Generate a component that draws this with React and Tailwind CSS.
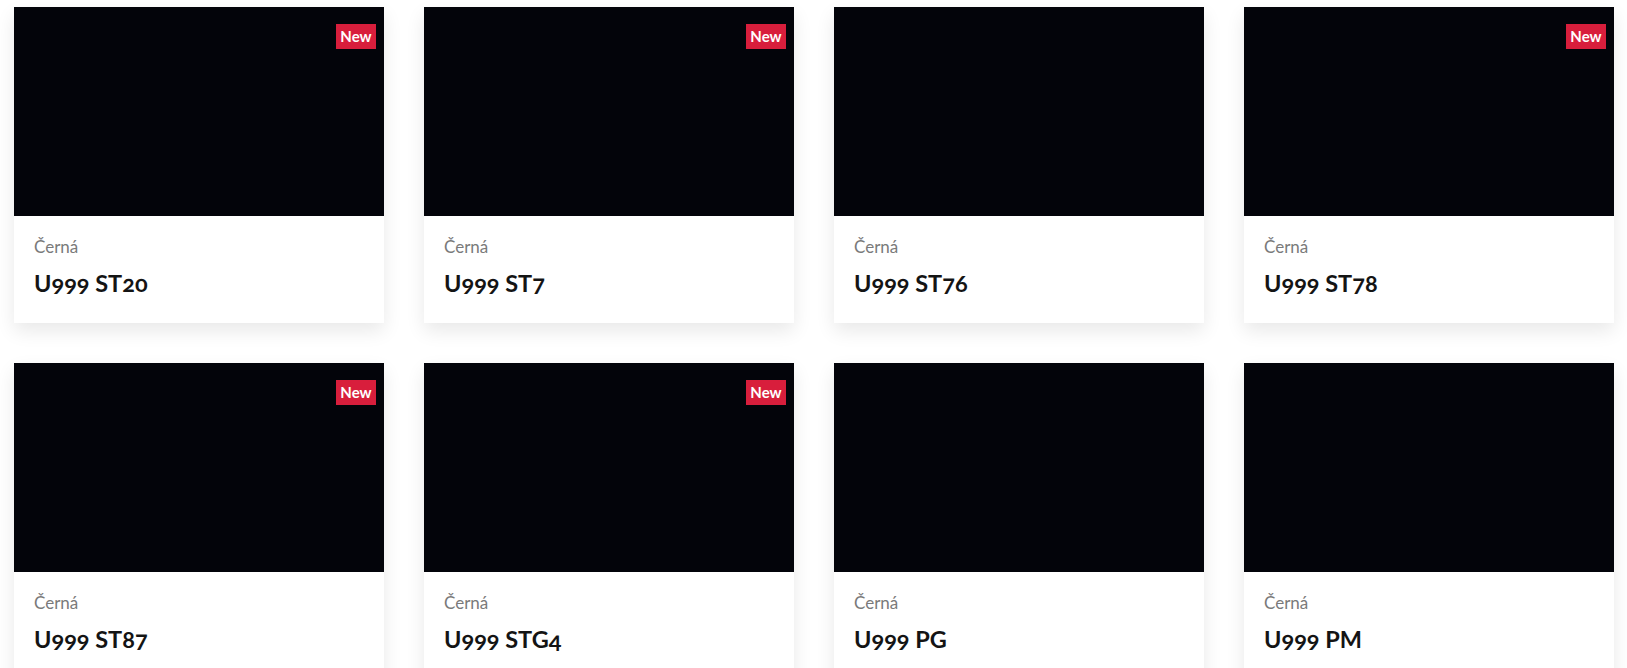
import React from "react";

const items = [
  { code: "U999 ST20", isNew: true },
  { code: "U999 ST7", isNew: true },
  { code: "U999 ST76", isNew: false },
  { code: "U999 ST78", isNew: true },
  { code: "U999 ST87", isNew: true },
  { code: "U999 STG4", isNew: true },
  { code: "U999 PG", isNew: false },
  { code: "U999 PM", isNew: false },
];

function Card({ code, isNew }) {
  return (
    <div className="bg-white shadow-[0_8px_18px_rgba(0,0,0,0.09)]">
      <div className="relative h-[209px] bg-[#03040a]">
        {isNew && (
          <span className="absolute right-[8px] top-[17px] flex h-[25px] w-[40px] items-center justify-center bg-[#d81e3c] text-[15px] font-bold leading-none text-white">
            New
          </span>
        )}
      </div>
      <div className="px-[20px] pb-[25px] pt-[19px]">
        <div className="text-[17px] leading-[24px] text-[#7a7a7a]">Černá</div>
        <div className="mt-[9px] text-[23.5px] font-bold leading-[30px] text-[#141414] oldstyle-nums">
          {code}
        </div>
      </div>
    </div>
  );
}

export default function App() {
  return (
    <div className="min-h-screen bg-white pl-[14px] pt-[7px] font-['Lato',sans-serif]">
      <div className="grid w-[1600px] grid-cols-[repeat(4,370px)] gap-x-[40px] gap-y-[40px]">
        {items.map((it) => (
          <Card key={it.code} {...it} />
        ))}
      </div>
    </div>
  );
}
